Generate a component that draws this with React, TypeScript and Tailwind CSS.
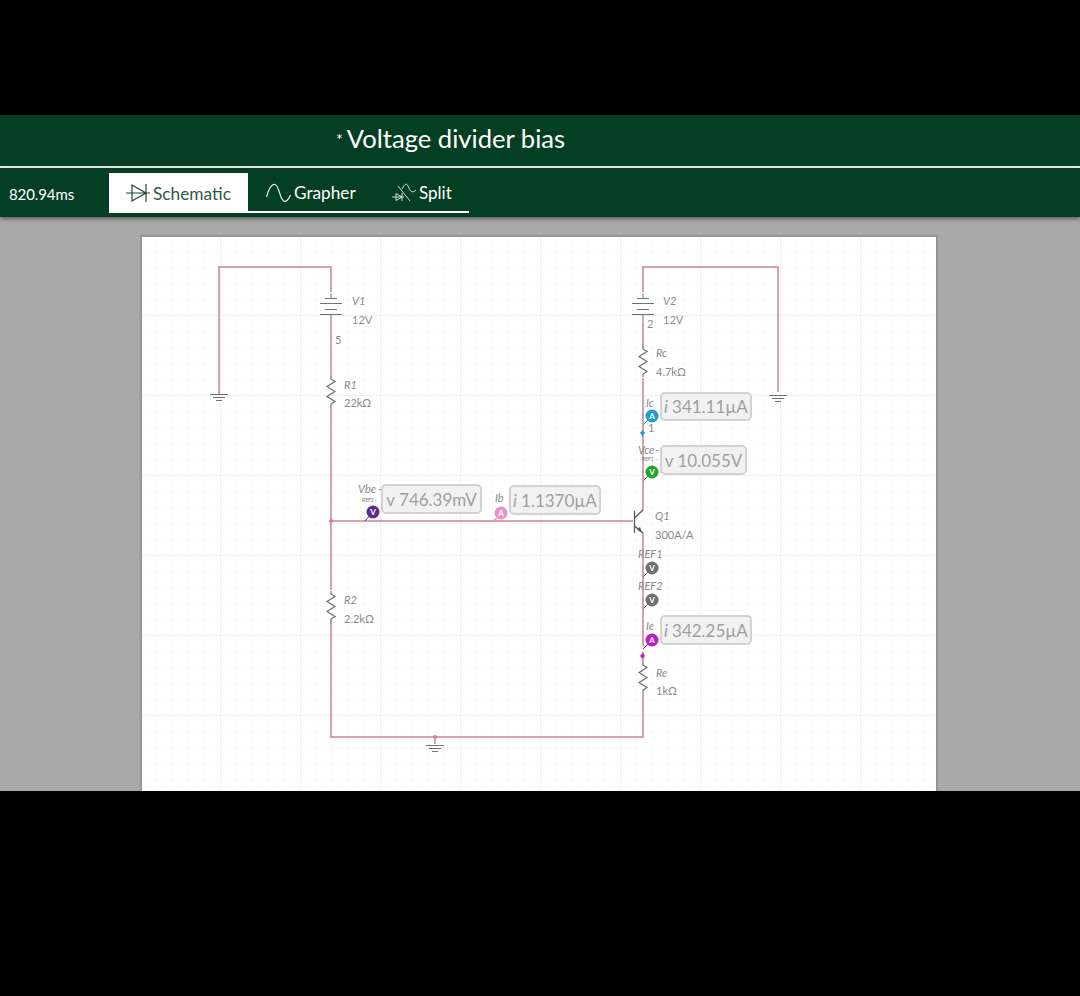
const ORIGIN_X = 142;
const ORIGIN_Y = 237;

const labels = [
  { text: 'V1', x: 352, y: 301, italic: true },
  { text: '12V', x: 352, y: 320 },
  { text: '5', x: 335, y: 340 },
  { text: 'R1', x: 344, y: 385, italic: true },
  { text: '22kΩ', x: 344, y: 403 },
  { text: 'R2', x: 344, y: 600, italic: true },
  { text: '2.2kΩ', x: 344, y: 619 },
  { text: 'V2', x: 663, y: 301, italic: true },
  { text: '12V', x: 663, y: 320 },
  { text: '2', x: 647, y: 324 },
  { text: 'Rc', x: 656, y: 353, italic: true },
  { text: '4.7kΩ', x: 656, y: 372 },
  { text: 'Ic', x: 646, y: 403, italic: true },
  { text: '1', x: 648, y: 428 },
  { text: 'Vce', x: 638, y: 450, italic: true },
  { text: '-', x: 655, y: 450 },
  { text: 'Vbe', x: 358, y: 489, italic: true },
  { text: '-', x: 378, y: 489 },
  { text: 'Ib', x: 495, y: 498, italic: true },
  { text: 'Q1', x: 655, y: 516, italic: true },
  { text: '300A/A', x: 655, y: 535 },
  { text: 'REF1', x: 638, y: 554, italic: true },
  { text: 'REF2', x: 638, y: 586, italic: true },
  { text: 'Ie', x: 646, y: 626, italic: true },
  { text: 'Re', x: 656, y: 673, italic: true },
  { text: '1kΩ', x: 656, y: 691 },
];

const readings = [
  { sign: 'i', value: '341.11µA', x: 660, y: 392, w: 92, h: 29 },
  { sign: 'v', value: '10.055V', x: 660, y: 445, w: 87, h: 30 },
  { sign: 'v', value: '746.39mV', x: 381, y: 484, w: 101, h: 30 },
  { sign: 'i', value: '1.1370µA', x: 509, y: 485, w: 92, h: 30 },
  { sign: 'i', value: '342.25µA', x: 660, y: 615, w: 92, h: 30 },
];

const probes = [
  { letter: 'A', x: 652, y: 416, fill: '#1f9bd0', wx: 643 },
  { letter: 'V', x: 652, y: 472, fill: '#1ea72b', wx: 643 },
  { letter: 'V', x: 373, y: 512, fill: '#5b2c8f', wx: 365 },
  { letter: 'A', x: 501, y: 513, fill: '#ee8ec6', wx: 494 },
  { letter: 'V', x: 652, y: 568, fill: '#6f6f6f', wx: 643 },
  { letter: 'V', x: 652, y: 600, fill: '#6f6f6f', wx: 643 },
  { letter: 'A', x: 652, y: 640, fill: '#b81fc8', wx: 643 },
];

function Battery({ x }: { x: number }) {
  return (
    <g stroke="#707070" strokeWidth="1">
      <path d={`M${x} 293.5V298.5M${x} 314.5V322`} />
      <path d={`M${x - 6} 298.5H${x + 6}M${x - 11} 303.5H${x + 11}M${x - 6} 309.5H${x + 6}M${x - 11} 314.5H${x + 11}`} />
    </g>
  );
}

function Ground({ x, y }: { x: number; y: number }) {
  return (
    <path
      d={`M${x - 9} ${y + 0.5}H${x + 9}M${x - 6} ${y + 3.5}H${x + 6}M${x - 3} ${y + 6.5}H${x + 3}`}
      stroke="#707070"
      strokeWidth="1"
    />
  );
}

function Resistor({ x, y }: { x: number; y: number }) {
  return (
    <path
      d={`M${x} ${y}V${y + 3}l4 2.5-8 5 8 5-8 5 8 5-4 2.5V${y + 31}`}
      fill="none"
      stroke="#666"
      strokeWidth="1.1"
    />
  );
}

function Schematic() {
  return (
    <svg className="absolute inset-0 h-full w-full" viewBox={`${ORIGIN_X} ${ORIGIN_Y} 794 556`}>
      <g fill="none" stroke="#c98591" strokeWidth="1.5">
        <path d="M219 395V267H331V292M331 322V376M331 407V590M331 621V737H643V693M643 662V652" />
        <path d="M643 292V267H778V392M643 322V347M643 378V510M643 533V646" />
        <path d="M331 521H633" />
        <path d="M435 737V744" />
      </g>
      <circle cx="331" cy="521" r="2" fill="#c98591" />
      <circle cx="435" cy="737" r="2" fill="#c98591" />
      <Battery x={331} />
      <Battery x={643} />
      <Resistor x={331} y={376} />
      <Resistor x={331} y={591} />
      <Resistor x={643} y={346} />
      <Resistor x={643} y={662} />
      <Ground x={219} y={394} />
      <Ground x={778} y={395} />
      <Ground x={435} y={745} />
      <g fill="none" stroke="#555" strokeWidth="1.2">
        <path d="M634.5 511V533M634.5 518L643 510M634.5 526L643 533" />
      </g>
      <path d="M637 529.5L642 533L640 527Z" fill="#555" />
      <path d="M642.5 430L645 433L642.5 436L640 433Z" fill="#1f9bd0" />
      <path d="M642.5 653L645 656L642.5 659L640 656Z" fill="#b81fc8" />
      <path d="M495 518L498 522L492 522Z" fill="#ee8ec6" />
      {probes.map((p) => (
        <g key={`${p.x}-${p.y}`}>
          <path d={`M${p.x} ${p.y}L${p.wx} ${p.y + 9}`} stroke={p.fill} strokeWidth="1" />
          <circle cx={p.x} cy={p.y} r="6.5" fill={p.fill} />
        </g>
      ))}
    </svg>
  );
}

export default function App() {
  return (
    <div className="flex h-[996px] w-[1080px] flex-col overflow-hidden bg-black font-['Lato','Open_Sans',sans-serif]">
      <div className="h-[115px] shrink-0" />
      <header className="flex h-[51px] shrink-0 items-center bg-[#053f23] pb-[3px] pl-[336px] text-white">
        <span className="mr-[4px] text-[16px] leading-none">*</span>
        <h1 className="text-[25.6px] font-normal leading-none">Voltage divider bias</h1>
      </header>
      <div className="h-[2px] shrink-0 bg-[#e8efe9]" />
      <nav className="z-10 flex h-[49px] shrink-0 items-start bg-[#053f23] pt-[5px] text-white shadow-[0_2px_4px_rgba(0,0,0,0.45)]">
        <span className="mt-[12px] w-[109px] pl-[9px] text-[15px] leading-[18px] tracking-[-0.1px]">820.94ms</span>
        <div className="flex h-[40px] border-b-2 border-white pt-[1px]">
          <div className="mb-[-2px] mt-[-1px] flex h-[40px] w-[139px] items-center justify-center bg-white pt-[1px] text-[#2f5a45]">
            <svg className="mr-[3px]" width="24" height="19" viewBox="0 0 24 19" fill="none" stroke="#1e4a34" strokeWidth="1.2">
              <path d="M0 9H24M6 1V17L20 9ZM20 0V18" />
            </svg>
            <span className="text-[17.3px]">Schematic</span>
          </div>
          <div className="flex w-[124px] items-center pl-[18px]">
            <svg className="mr-[3px]" width="25" height="20" viewBox="0 0 25 20" fill="none" stroke="#e6efe9" strokeWidth="1.2">
              <path d="M0.5 14C3 5 6 1 9 1.5S13 9 15 14S19 19 21 17.5S23.5 14 24.5 12" />
            </svg>
            <span className="text-[17.2px]">Grapher</span>
          </div>
          <div className="flex w-[97px] items-center pl-[20px]">
            <svg className="mr-[2px]" width="25" height="20" viewBox="0 0 25 20" fill="none" stroke="#e6efe9" strokeWidth="0.9">
              <path d="M0 14H12M4 10.5V17.5L10 14ZM10 10V18M6 3L18 18M10 6C13 0 15 0 16.5 4S20 11 24 7" />
            </svg>
            <span className="text-[17px]">Split</span>
          </div>
        </div>
      </nav>
      <main className="h-[574px] shrink-0 overflow-hidden bg-[#a9a9a9] pl-[140px] pt-[18px]">
        <section className="relative h-[600px] w-[798px] border-2 border-[#959595] bg-white">
          <div className="absolute inset-0 bg-[linear-gradient(#f0f0f0_1px,transparent_1px),linear-gradient(90deg,#f0f0f0_1px,transparent_1px),linear-gradient(#f9f9f9_1px,transparent_1px),linear-gradient(90deg,#f9f9f9_1px,transparent_1px)] bg-[size:80px_80px,80px_80px,16px_16px,16px_16px] bg-[position:0_78px,78px_0,0_14px,14px_0]" />
          <div className="absolute inset-x-0 top-0 h-[556px]">
            <Schematic />
          </div>
          {labels.map((l) => (
            <span
              key={`${l.text}-${l.x}-${l.y}`}
              className={`absolute text-[11px] leading-none text-[#8a8a8a] ${l.italic ? 'italic' : ''}`}
              style={{ left: l.x - ORIGIN_X, top: l.y - ORIGIN_Y - 6 }}
            >
              {l.text}
            </span>
          ))}
          <span className="absolute left-[220px] top-[261px] text-[5px] leading-none text-[#777]">REF2 -</span>
          <span className="absolute left-[500px] top-[220px] text-[5px] leading-none text-[#777]">REF1 -</span>
          {readings.map((r) => (
            <div
              key={r.value}
              className="absolute flex items-center justify-center whitespace-nowrap rounded-[5px] border-2 border-[#d2d2d2] bg-[#f1f1f1] text-[17px] leading-none text-[#a0a0a0]"
              style={{ left: r.x - ORIGIN_X, top: r.y - ORIGIN_Y, width: r.w, height: r.h }}
            >
              <span className={r.sign === 'i' ? 'mr-[4px] italic' : 'mr-[4px]'}>{r.sign}</span>
              {r.value}
            </div>
          ))}
          {probes.map((p) => (
            <span
              key={`${p.x}-${p.y}-text`}
              className="absolute w-[13px] text-center text-[8px] font-bold leading-[13px] text-white"
              style={{ left: p.x - ORIGIN_X - 6.5, top: p.y - ORIGIN_Y - 6.5 }}
            >
              {p.letter}
            </span>
          ))}
        </section>
      </main>
      <div className="flex-1" />
    </div>
  );
}
